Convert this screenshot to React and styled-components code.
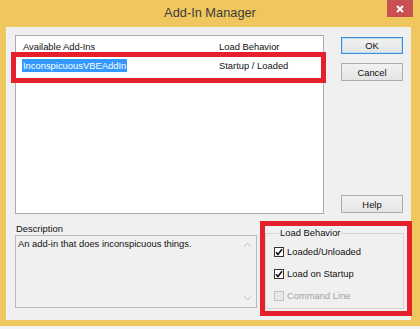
import React from "react";
import styled, { createGlobalStyle } from "styled-components";

const GlobalStyle = createGlobalStyle`
    body {
        margin: 0;
        background: #f3f3f3;
        font-family: "Liberation Sans", Arial, sans-serif;
    }
`;

const Window = styled.div`
    width: 420px;
    height: 326px;
    background: #f0c75e;
    display: flex;
    flex-direction: column;
    box-sizing: border-box;
`;

const TitleBar = styled.div`
    height: 27px;
    display: flex;
    align-items: flex-start;
    flex-shrink: 0;
`;

const Spacer = styled.div`
    width: 33px;
`;

const Title = styled.div`
    flex: 1;
    text-align: center;
    font-size: 12.8px;
    line-height: 16px;
    padding-top: 5px;
    color: #3c3c3c;
`;

const CloseBtn = styled.div`
    width: 26px;
    height: 17px;
    margin-right: 7px;
    background: #c85050;
    display: flex;
    align-items: center;
    justify-content: center;
`;

const Client = styled.div`
    flex: 1;
    margin: 0 9px 6px 6px;
    background: #f0f0f0;
    padding: 8px 0 0 9px;
    display: flex;
    flex-direction: column;
`;

const TopRow = styled.div`
    display: flex;
    gap: 17px;
`;

const ListBox = styled.div`
    position: relative;
    width: 309px;
    height: 179px;
    box-sizing: border-box;
    background: #fff;
    border: 1px solid #a8abb2;
    padding: 3px 0 0 6px;
    font-size: 9.4px;
`;

const ListRow = styled.div`
    display: grid;
    grid-template-columns: 196px 1fr;
    height: ${(p) => p.$h}px;
    line-height: ${(p) => p.$h}px;
    margin-bottom: ${(p) => p.$gap || 0}px;
    color: #111;
`;

const Cell = styled.span`
    padding: 0 1px;
    justify-self: start;
    background: ${(p) => (p.$selected ? "#3399ff" : "transparent")};
    color: ${(p) => (p.$selected ? "#fff" : "inherit")};
`;

const RedFrame = styled.div`
    position: absolute;
    left: ${(p) => p.$l}px;
    top: ${(p) => p.$t}px;
    width: ${(p) => p.$w}px;
    height: ${(p) => p.$h}px;
    box-sizing: border-box;
    border: 5px solid #e3202b;
    pointer-events: none;
`;

const ButtonColumn = styled.div`
    width: 62px;
    height: 179px;
    display: flex;
    flex-direction: column;
    padding: 2px 0 1px;
    box-sizing: border-box;
`;

const Button = styled.button`
    width: 62px;
    height: ${(p) => p.$h || 18}px;
    margin-top: ${(p) => p.$mt || "0"};
    box-sizing: border-box;
    padding: 0;
    font-family: "Liberation Sans", Arial, sans-serif;
    font-size: 9.4px;
    color: #111;
    background: linear-gradient(#f2f2f2, #e4e4e4);
    border: 1px solid ${(p) => (p.$default ? "#3f8fd6" : "#adadad")};
    box-shadow: ${(p) => (p.$default ? "inset 0 0 0 1px #b9dcf7" : "none")};
`;

const BottomRow = styled.div`
    display: flex;
    gap: 8px;
`;

const DescColumn = styled.div`
    width: 242px;
    padding-top: 9px;
`;

const Label = styled.div`
    font-size: 9.4px;
    line-height: 12px;
    padding-left: 1px;
    color: #111;
`;

const DescBox = styled.div`
    height: 73px;
    box-sizing: border-box;
    border: 1px solid #b9b9b9;
    background: #f0f0f0;
    display: flex;
`;

const DescText = styled.div`
    flex: 1;
    font-size: 9.4px;
    line-height: 12px;
    padding: 2px 2px;
    color: #111;
`;

const ScrollCol = styled.div`
    width: 17px;
    display: flex;
    flex-direction: column;
    justify-content: space-between;
`;

const ScrollBtn = styled.div`
    height: 17px;
    display: flex;
    align-items: center;
    justify-content: center;
`;

const GroupWrap = styled.div`
    position: relative;
    margin-top: 13px;
`;

const GroupBox = styled.fieldset`
    width: 139px;
    height: 82px;
    box-sizing: border-box;
    margin: 0;
    padding: 6px 0 0 8px;
    border: 1px solid #d6d6d6;
    display: flex;
    flex-direction: column;
    gap: 9px;
`;

const Legend = styled.legend`
    font-size: 9.4px;
    line-height: 12px;
    padding: 0 1px;
    margin-left: 5px;
    color: #111;
`;

const CheckRow = styled.div`
    display: flex;
    align-items: center;
    height: 13px;
    font-size: 9.4px;
    color: ${(p) => (p.$disabled ? "#a2a2a2" : "#111")};
`;

const Box = styled.span`
    width: 10px;
    height: 10px;
    box-sizing: border-box;
    border: 1px solid ${(p) => (p.$disabled ? "#c4c4c4" : "#333")};
    background: ${(p) => (p.$disabled ? "#e8e8e8" : "#fff")};
    margin-right: 3px;
    display: flex;
    align-items: center;
    justify-content: center;
`;

const Check = () => (
    <svg width="8" height="8" viewBox="0 0 8 8">
        <path d="M1 4.2 L3 6.4 L7 1.2" fill="none" stroke="#111" strokeWidth="1.6" />
    </svg>
);

const Chevron = ({ up }) => (
    <svg width="7" height="5" viewBox="0 0 7 5">
        <path d={up ? "M0.5 4.5 L3.5 1 L6.5 4.5" : "M0.5 0.5 L3.5 4 L6.5 0.5"} fill="none" stroke="#bdbdbd" strokeWidth="1" />
    </svg>
);

const CheckItem = ({ checked, disabled, children }) => (
    <CheckRow $disabled={disabled}>
        <Box $disabled={disabled}>{checked && <Check />}</Box>
        {children}
    </CheckRow>
);

const App = () => {
    return (
        <>
            <GlobalStyle />
            <Window>
                <TitleBar>
                    <Spacer />
                    <Title>Add-In Manager</Title>
                    <CloseBtn>
                        <svg width="8" height="8" viewBox="0 0 8 8">
                            <path d="M1 1 L7 7 M7 1 L1 7" stroke="#fff" strokeWidth="1.8" />
                        </svg>
                    </CloseBtn>
                </TitleBar>
                <Client>
                    <TopRow>
                        <ListBox>
                            <ListRow $h={16} $gap={4}>
                                <Cell>Available Add-Ins</Cell>
                                <Cell>Load Behavior</Cell>
                            </ListRow>
                            <ListRow $h={13}>
                                <Cell $selected>InconspicuousVBEAddIn</Cell>
                                <Cell>Startup / Loaded</Cell>
                            </ListRow>
                            <RedFrame $l={-5} $t={16} $w={315} $h={31} />
                        </ListBox>
                        <ButtonColumn>
                            <Button $default $h={17}>OK</Button>
                            <Button $mt="9px">Cancel</Button>
                            <Button $mt="auto">Help</Button>
                        </ButtonColumn>
                    </TopRow>
                    <BottomRow>
                        <DescColumn>
                            <Label>Description</Label>
                            <DescBox>
                                <DescText>An add-in that does inconspicuous things.</DescText>
                                <ScrollCol>
                                    <ScrollBtn><Chevron up /></ScrollBtn>
                                    <ScrollBtn><Chevron /></ScrollBtn>
                                </ScrollCol>
                            </DescBox>
                        </DescColumn>
                        <GroupWrap>
                            <GroupBox>
                                <Legend>Load Behavior</Legend>
                                <CheckItem checked>Loaded/Unloaded</CheckItem>
                                <CheckItem checked>Load on Startup</CheckItem>
                                <CheckItem disabled>Command Line</CheckItem>
                            </GroupBox>
                            <RedFrame $l={-5} $t={-6} $w={152} $h={95} />
                        </GroupWrap>
                    </BottomRow>
                </Client>
            </Window>
        </>
    );
};

export default App;
